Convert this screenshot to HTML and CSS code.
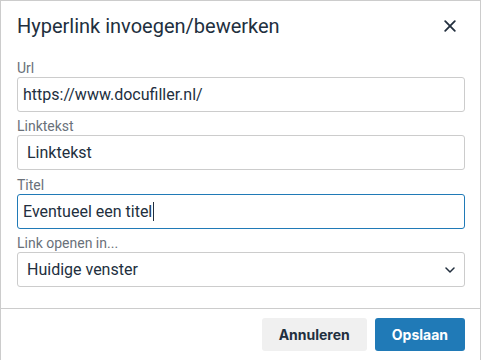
FILE: index.html
```html
<!DOCTYPE html>
<html lang="nl">
<head>
  <meta charset="UTF-8" />
  <meta name="viewport" content="width=device-width, initial-scale=1.0"/>
  <title>Hyperlink invoegen/bewerken</title>
  <link rel="stylesheet" href="styles.css">
</head>
<body>

<div class="dialog">
  <div class="dialog-header">
    <h1 class="dialog-title">Hyperlink invoegen/bewerken</h1>
    <button class="close-btn" aria-label="Sluiten">
      <svg width="12" height="12" viewBox="0 0 12 12">
        <path d="M1.2 1.2 L10.8 10.8 M10.8 1.2 L1.2 10.8" stroke="#222f3e" stroke-width="1.8" stroke-linecap="round"/>
      </svg>
    </button>
  </div>

  <div class="dialog-body">
    <div class="field">
      <label>Url</label>
      <div class="textfield">https://www.docufiller.nl/</div>
    </div>
    <div class="field">
      <label>Linktekst</label>
      <div class="textfield indent">Linktekst</div>
    </div>
    <div class="field">
      <label>Titel</label>
      <div class="textfield focused">Eventueel een titel<span class="caret"></span></div>
    </div>
    <div class="field">
      <label>Link openen in...</label>
      <div class="textfield selectbox">
        <span>Huidige venster</span>
        <svg width="10" height="6" viewBox="0 0 10 6">
          <path d="M1 1 L5 5 L9 1" fill="none" stroke="#222f3e" stroke-width="1.5" stroke-linecap="round" stroke-linejoin="round"/>
        </svg>
      </div>
    </div>
  </div>

  <div class="dialog-footer">
    <button class="btn btn-secondary">Annuleren</button>
    <button class="btn btn-primary">Opslaan</button>
  </div>
</div>

</body>
</html>
```

FILE: styles.css
```css
:root {
  --text: #222f3e;
  --muted: #6a717a;
  --border: #cccccc;
  --primary: #207ab7;
}

* { margin: 0; padding: 0; box-sizing: border-box; }

html, body {
  background: #ffffff;
  font-family: Roboto, "Open Sans", sans-serif;
  color: var(--text);
}

.dialog {
  width: 481px;
  height: 360px;
  border: 1px solid var(--border);
  border-bottom: none;
  background: #fff;
  display: flex;
  flex-direction: column;
  box-shadow: 0 1px 0 #e8d6e8;
}

.dialog-header {
  display: flex;
  justify-content: space-between;
  align-items: flex-start;
  padding: 12px 16px 0 16px;
}

.dialog-title {
  font-size: 20px;
  font-weight: 400;
  line-height: 26px;
}

.close-btn {
  background: none;
  border: none;
  width: 24px;
  height: 24px;
  margin-top: 1px;
  margin-right: 2px;
  display: flex;
  align-items: center;
  justify-content: center;
}

.dialog-body {
  flex: 1;
  display: flex;
  flex-direction: column;
  gap: 6.4px;
  padding: 21px 15px 0 16px;
}

.field {
  display: flex;
  flex-direction: column;
}

.field label {
  font-size: 14px;
  line-height: 17px;
  color: var(--muted);
}

.textfield {
  height: 35px;
  border: 1px solid var(--border);
  border-radius: 3px;
  padding: 0 5px;
  font-size: 16px;
  line-height: 33px;
  color: var(--text);
  display: flex;
  align-items: center;
}

.textfield.indent { padding-left: 9px; }

.textfield.focused { border-color: var(--primary); }

.caret {
  display: inline-block;
  width: 1px;
  height: 19px;
  background: var(--text);
  margin-left: 1px;
}

.selectbox {
  justify-content: space-between;
  padding: 0 9px 0 9px;
}

.dialog-footer {
  border-top: 1px solid var(--border);
  display: flex;
  justify-content: flex-end;
  gap: 8px;
  padding: 9px 15px 9px 16px;
}

.btn {
  height: 33px;
  padding: 0 17px;
  border: none;
  border-radius: 3px;
  font-family: Inter, Roboto, sans-serif;
  font-size: 14px;
  font-weight: 700;
}

.btn-secondary {
  background: #f0f0f0;
  color: var(--text);
}

.btn-primary {
  background: var(--primary);
  color: #fff;
}
```
